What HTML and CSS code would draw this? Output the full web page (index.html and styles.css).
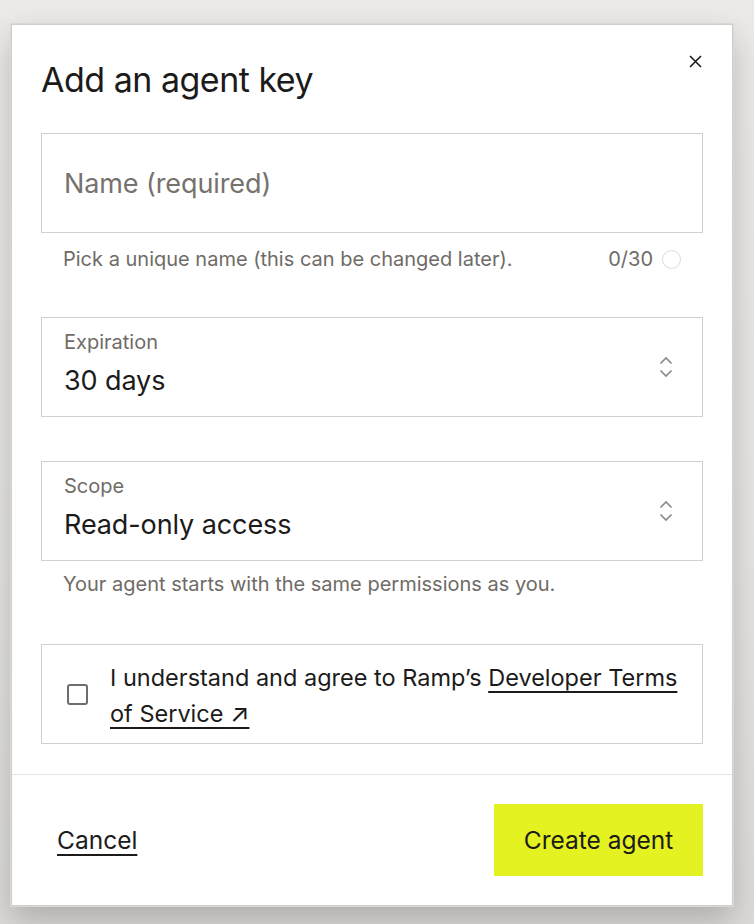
FILE: index.html
```html
<!DOCTYPE html>
<html lang="en">
<head>
<meta charset="utf-8">
<title>Add an agent key</title>
<link rel="stylesheet" href="styles.css">
</head>
<body>
<div class="modal">
  <div class="modal-body">
    <div class="header">
      <h1 class="title">Add an agent key</h1>
      <button class="close" aria-label="Close">
        <svg width="13" height="13" viewBox="0 0 13 13"><path d="M1 1L12 12M12 1L1 12" stroke="#1c1b1a" stroke-width="1.6" fill="none"/></svg>
      </button>
    </div>

    <div class="field field-name">
      <span class="placeholder">Name (required)</span>
    </div>
    <div class="helper helper-name">
      <span>Pick a unique name (this can be changed later).</span>
      <span class="counter">0/30 <span class="ring"></span></span>
    </div>

    <div class="field select select-exp">
      <div class="select-text">
        <div class="label">Expiration</div>
        <div class="value">30 days</div>
      </div>
      <svg class="chev" width="14" height="22" viewBox="0 0 14 22"><path d="M1.5 7.5L7 2L12.5 7.5M1.5 14.5L7 20L12.5 14.5" stroke="#8d8984" stroke-width="1.7" fill="none"/></svg>
    </div>

    <div class="field select select-scope">
      <div class="select-text">
        <div class="label">Scope</div>
        <div class="value">Read-only access</div>
      </div>
      <svg class="chev" width="14" height="22" viewBox="0 0 14 22"><path d="M1.5 7.5L7 2L12.5 7.5M1.5 14.5L7 20L12.5 14.5" stroke="#8d8984" stroke-width="1.7" fill="none"/></svg>
    </div>
    <div class="helper helper-scope">Your agent starts with the same permissions as you.</div>

    <div class="field agree">
      <span class="checkbox"></span>
      <p class="agree-text">I understand and agree to Ramp’s <a class="link" href="#">Developer Terms of&nbsp;Service&nbsp;<span class="ext">↗</span></a></p>
    </div>
  </div>
  <div class="footer">
    <a class="cancel" href="#">Cancel</a>
    <button class="primary">Create agent</button>
  </div>
</div>
</body>
</html>
```

FILE: styles.css
```css
* { box-sizing: border-box; }
html, body { margin: 0; padding: 0; }
body {
  width: 754px;
  height: 924px;
  overflow: hidden;
  background: linear-gradient(180deg, #eceae6 0%, #e6e5e2 60%, #dcdbd8 100%);
  font-family: Inter, "Noto Sans", sans-serif;
  color: #1c1b1a;
  padding: 24px 0 0 11px;
}
.modal {
  width: 722px;
  height: 882px;
  background: #fff;
  border: 1px solid #cfceca;
  box-shadow: 0 0 0 1px #d9d8d4, 0 14px 30px rgba(0,0,0,0.22);
  display: flex;
  flex-direction: column;
}
.modal-body {
  padding: 35px 29px 30px 29px;
  flex: 1;
}
.header {
  display: flex;
  justify-content: space-between;
  align-items: flex-start;
}
.title {
  margin: 0;
  font-size: 34px;
  line-height: 40px;
  font-weight: 400;
  letter-spacing: -0.5px;
}
.close {
  border: 0;
  background: none;
  padding: 0;
  margin: -5px 1px 0 0;
  width: 13px;
  height: 13px;
  display: block;
}
.close svg { display: block; }
.field {
  border: 1px solid #d2d0cc;
  height: 100px;
}
.field-name {
  margin-top: 33px;
  display: flex;
  align-items: center;
  padding-left: 22px;
}
.placeholder {
  font-size: 27px;
  color: #76726d;
  letter-spacing: -0.1px;
}
.helper {
  font-size: 20px;
  line-height: 24px;
  color: #6f6b66;
  padding-left: 22px;
}
.helper-name {
  margin-top: 14px;
  display: flex;
  justify-content: space-between;
  align-items: center;
  padding-right: 22px;
}
.counter {
  display: flex;
  align-items: center;
  gap: 9px;
}
.ring {
  width: 19px;
  height: 19px;
  border-radius: 50%;
  border: 1.5px solid #dddbd7;
  display: inline-block;
}
.select {
  display: flex;
  align-items: center;
  justify-content: space-between;
  padding: 0 29px 0 22px;
}
.select-exp { margin-top: 46px; }
.select-scope { margin-top: 44px; }
.select-text {
  align-self: flex-start;
  padding-top: 12px;
}
.label {
  font-size: 20px;
  line-height: 24px;
  color: #6f6b66;
}
.value {
  margin-top: 10px;
  font-size: 27px;
  line-height: 34px;
  color: #1c1b1a;
  letter-spacing: -0.1px;
}
.chev { display: block; }
.helper-scope { margin-top: 11px; }
.agree {
  margin-top: 48px;
  display: flex;
  align-items: center;
  padding: 4px 12px 0 25px;
}
.checkbox {
  width: 21px;
  height: 21px;
  border: 2px solid #6f6c69;
  border-radius: 3px;
  flex: none;
  margin-right: 22px;
  margin-top: -4px;
}
.agree-text {
  margin: 0;
  font-size: 23.5px;
  line-height: 36px;
  color: #1c1b1a;
}
.link {
  color: #1c1b1a;
  text-decoration: underline;
  text-decoration-thickness: 2px;
  text-underline-offset: 5px;
}
.ext {
  font-size: 25px;
  line-height: 20px;
}
.footer {
  border-top: 1px solid #e6e4e3;
  padding: 29px 29px 29px 45px;
  display: flex;
  justify-content: space-between;
  align-items: center;
}
.cancel {
  font-size: 24.5px;
  color: #1c1b1a;
  text-decoration: underline;
  text-decoration-thickness: 2px;
  text-underline-offset: 5px;
}
.primary {
  width: 209px;
  height: 72px;
  border: 0;
  background: #e4f222;
  font-family: Inter, "Noto Sans", sans-serif;
  font-size: 24.5px;
  color: #1c1b1a;
  padding: 0;
}
```
